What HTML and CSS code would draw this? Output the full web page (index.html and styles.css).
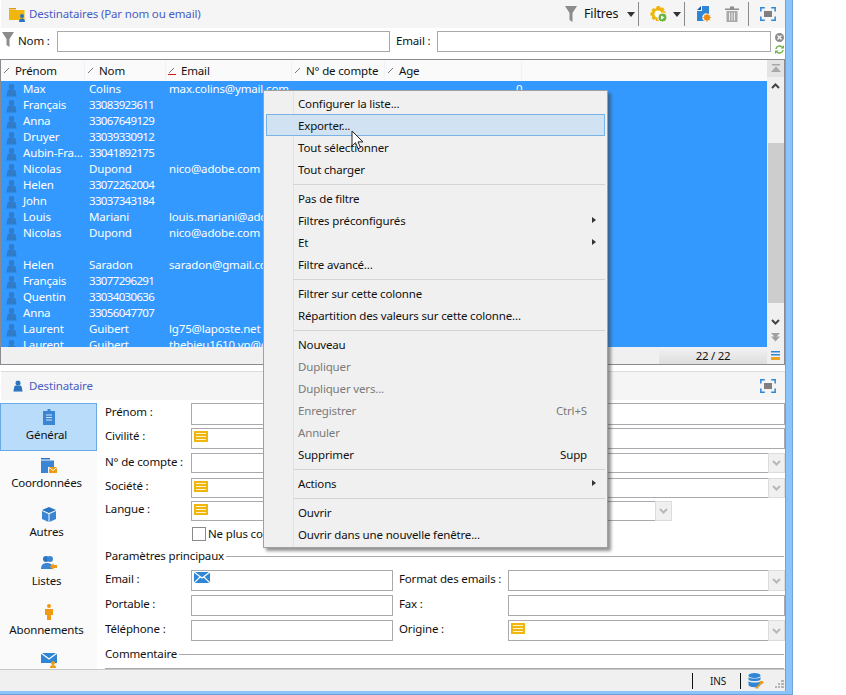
FILE: index.html
```html
<!DOCTYPE html>
<html lang="fr">
<head>
<meta charset="utf-8">
<title>Destinataires</title>
<link rel="stylesheet" href="styles.css">
</head>
<body>
<svg class="defs" width="0" height="0" aria-hidden="true">
  <symbol id="person" viewBox="0 0 12 14"><circle cx="6" cy="3.500" r="3"/><path d="M3.500 6.500h5c1 0 1.800.8 2 1.800L11.500 14H.5l1-5.700c.2-1 1-1.800 2-1.800z"/></symbol>
  <symbol id="max" viewBox="0 0 16 14"><path fill="none" stroke="#2f86d6" stroke-width="1.500" d="M.8 4.500V.8h4M11.200.8h4v3.700M15.200 9.500v3.700h-4M4.800 13.200h-4V9.500"/><rect x="4" y="4" width="8" height="6" fill="#808080"/></symbol>
  <symbol id="list" viewBox="0 0 14 11"><rect width="14" height="11" fill="#f1b60d"/><path d="M2 2.500h10M2 5.500h10M2 8.500h10" stroke="#fdf3cf" stroke-width="1"/></symbol>
  <symbol id="env" viewBox="0 0 16 11"><rect width="16" height="11" fill="#2f86d6"/><path d="M0 0l8 6 8-6M0 11l6-6M16 11l-6-6" fill="none" stroke="#fff" stroke-width="1.200"/></symbol>
  <symbol id="chev" viewBox="0 0 9 6"><path d="M1 1l3.500 3.500L8 1" fill="none" stroke="currentColor" stroke-width="2"/></symbol>
</svg>
<div class="window">
  <div class="inner">
    <header class="toolbar">
      <div class="title">
        <svg class="ic-folder" width="17" height="15" viewBox="0 0 17 15"><path d="M0 1h7v1.500H0z" fill="#e39a12"/><path d="M0 3h15.500v10H0z" fill="#f1b60d"/><circle cx="13" cy="9" r="2" fill="#2b74c0"/><path d="M10 15c0-2.500 1-3.500 3-3.500s3 1 3 3.500z" fill="#2b74c0"/></svg>
        <span>Destinataires (Par nom ou email)</span>
      </div>
      <div class="tools">
        <svg class="funnel t1" width="12" height="16" viewBox="0 0 12 16"><path d="M0 0h12L7.500 7v9l-3-2V7z" fill="#8c8c8c"/></svg>
        <span class="filtres">Filtres</span>
        <i class="caret c1"></i>
        <i class="tsep s1"></i>
        <svg class="t2" width="18" height="18" viewBox="0 0 18 18"><path d="M7 1h3l.5 2 2-.8 2 2-1 1.800 2 .6v3l-2 .5.5 1.500-3 3-1.500-.6-.5 2H6l-.6-2-1.900.9-2-2 .9-1.900-2-.6v-3l2-.5-.9-1.900 2-2 1.900.9z" fill="#f1b60d"/><circle cx="8" cy="9" r="3.500" fill="#fff"/><circle cx="12.500" cy="12.500" r="4.500" fill="#6db33f" stroke="#fff"/><path d="M11 10.500l3.500 2-3.500 2z" fill="#fff"/></svg>
        <i class="caret c2"></i>
        <i class="tsep s2"></i>
        <svg class="t3" width="14" height="16" viewBox="0 0 14 16"><path d="M5 0h7v8a4 4 0 0 0-5 7H0V5h5z" fill="#2f86d6"/><path d="M4 0v4H0z" fill="#1f5ea8"/><circle cx="10" cy="11.500" r="3" fill="#ef8a12"/><path d="M10 7v9M5.500 11.500h9M7 8.500l6 6M13 8.500l-6 6" stroke="#ef8a12" stroke-width=".8"/></svg>
        <svg class="t4" width="14" height="16" viewBox="0 0 14 16"><path d="M0 2.500h14v1.500H0zM5 .5h4v2H5z" fill="#8c8c8c"/><path d="M1.500 5h11v11h-11z" fill="#a8a8a8"/><path d="M4.500 6.500v8M7 6.500v8M9.500 6.500v8" stroke="#eee"/></svg>
        <i class="tsep s3"></i>
        <svg class="t5" width="16" height="14"><use href="#max"/></svg>
      </div>
    </header>

    <div class="filterbar">
      <svg class="f-funnel" width="12" height="15" viewBox="0 0 12 15"><path d="M0 0h12L7.500 7v8l-3-2V7z" fill="#8c8c8c"/></svg>
      <label class="f-label f-lnom">Nom :</label>
      <div class="box f-nom"></div>
      <label class="f-label f-mail">Email :</label>
      <div class="box f-email"></div>
      <div class="f-actions">
        <svg width="9" height="9" viewBox="0 0 9 9"><circle cx="4.500" cy="4.500" r="4.500" fill="#8c8c8c"/><path d="M2.500 2.500l4 4M6.500 2.500l-4 4" stroke="#fff" stroke-width="1.200"/></svg>
        <svg width="9" height="9" viewBox="0 0 9 9"><path d="M1 4a3.500 3.500 0 0 1 6-2M8 5a3.500 3.500 0 0 1-6 2" fill="none" stroke="#6db33f" stroke-width="1.500"/><path d="M9 0v3.500H5.500zM0 9V5.500h3.500z" fill="#6db33f"/></svg>
      </div>
    </div>

    <section class="table">
      <div class="t-main">
        <div class="thead">
          <div class="th w1"><i class="sort"></i>Prénom</div>
          <div class="th w2"><i class="sort"></i>Nom</div>
          <div class="th w3"><i class="sort"></i><i class="sort-red"></i>Email</div>
          <div class="th w4"><i class="sort"></i>N° de compte</div>
          <div class="th w5"><i class="sort"></i>Age</div>
        </div>
        <div class="tbody">
          <div class="tr"><svg class="p"><use href="#person"/></svg><span class="td c1st">Max</span><span class="td c2nd">Colins</span><span class="td c3rd">max.colins@ymail.com</span><span class="td c5th">0</span></div>
          <div class="tr"><svg class="p"><use href="#person"/></svg><span class="td c1st">Français</span><span class="td c2nd num">33083923611</span></div>
          <div class="tr"><svg class="p"><use href="#person"/></svg><span class="td c1st">Anna</span><span class="td c2nd num">33067649129</span></div>
          <div class="tr"><svg class="p"><use href="#person"/></svg><span class="td c1st">Druyer</span><span class="td c2nd num">33039330912</span></div>
          <div class="tr"><svg class="p"><use href="#person"/></svg><span class="td c1st">Aubin-Fra...</span><span class="td c2nd num">33041892175</span></div>
          <div class="tr"><svg class="p"><use href="#person"/></svg><span class="td c1st">Nicolas</span><span class="td c2nd">Dupond</span><span class="td c3rd">nico@adobe.com</span></div>
          <div class="tr"><svg class="p"><use href="#person"/></svg><span class="td c1st">Helen</span><span class="td c2nd num">33072262004</span></div>
          <div class="tr"><svg class="p"><use href="#person"/></svg><span class="td c1st">John</span><span class="td c2nd num">33037343184</span></div>
          <div class="tr"><svg class="p"><use href="#person"/></svg><span class="td c1st">Louis</span><span class="td c2nd">Mariani</span><span class="td c3rd">louis.mariani@adobe.com</span></div>
          <div class="tr"><svg class="p"><use href="#person"/></svg><span class="td c1st">Nicolas</span><span class="td c2nd">Dupond</span><span class="td c3rd">nico@adobe.com</span></div>
          <div class="tr"><svg class="p"><use href="#person"/></svg></div>
          <div class="tr"><svg class="p"><use href="#person"/></svg><span class="td c1st">Helen</span><span class="td c2nd">Saradon</span><span class="td c3rd">saradon@gmail.com</span></div>
          <div class="tr"><svg class="p"><use href="#person"/></svg><span class="td c1st">Français</span><span class="td c2nd num">33077296291</span></div>
          <div class="tr"><svg class="p"><use href="#person"/></svg><span class="td c1st">Quentin</span><span class="td c2nd num">33034030636</span></div>
          <div class="tr"><svg class="p"><use href="#person"/></svg><span class="td c1st">Anna</span><span class="td c2nd num">33056047707</span></div>
          <div class="tr"><svg class="p"><use href="#person"/></svg><span class="td c1st">Laurent</span><span class="td c2nd">Guibert</span><span class="td c3rd">lg75@laposte.net</span></div>
          <div class="tr"><svg class="p"><use href="#person"/></svg><span class="td c1st">Laurent</span><span class="td c2nd">Guibert</span><span class="td c3rd">thebieu1610.vn@gmail.com</span></div>
        </div>
        <div class="tfoot"><span class="count">22 / 22</span></div>
      </div>
      <div class="scroll">
        <div class="sb-top"><svg width="12" height="9" viewBox="0 0 12 9"><path d="M2 0h8v1.500H2zM6 2.500L11 8H1z" fill="#a8a8a8"/></svg></div>
        <svg class="sb-up" width="9" height="6"><use href="#chev" transform="matrix(1 0 0 -1 0 6)"/></svg>
        <div class="sb-thumb"></div>
        <svg class="sb-down" width="9" height="6"><use href="#chev"/></svg>
        <svg class="sb-end" width="9" height="9" viewBox="0 0 9 9"><path d="M0 0h9L4.500 4.500zM0 3.500h9L4.500 8.500z" fill="#a0a0a0"/></svg>
        <svg class="sb-menu" width="9" height="9" viewBox="0 0 9 9"><path d="M0 0h9v1.500H0zM0 3h9v1.500H0z" fill="#2f86d6"/><path d="M0 6h9v3H0z" fill="#efa21e"/></svg>
      </div>
    </section>

    <div class="d-head">
      <div class="title">
        <svg class="d-person" width="10" height="14" viewBox="0 0 12 14"><use href="#person"/></svg>
        <span>Destinataire</span>
      </div>
      <svg width="16" height="14"><use href="#max"/></svg>
    </div>

    <div class="detail">
      <nav class="tabs">
        <div class="tab active">
          <svg width="12" height="16" viewBox="0 0 12 16"><path d="M4.500 0h3v2H12v14H0V2h4.500z" fill="#3a86d4"/><path d="M3 6h6M3 8.500h6M3 11h6" stroke="#cfe4f8"/></svg>
          <span>Général</span>
        </div>
        <div class="tab">
          <svg width="16" height="15" viewBox="0 0 16 15"><path d="M0 0h9v1.500H0z" fill="#2b74c0"/><path d="M0 2.500h13V9H7v6H0z" fill="#3a86d4"/><rect x="8" y="9" width="8" height="6" fill="#ef9a12"/><path d="M8 9.500l4 3 4-3" fill="none" stroke="#fff"/></svg>
          <span>Coordonnées</span>
        </div>
        <div class="tab">
          <svg width="14" height="15" viewBox="0 0 14 15"><path d="M7 0l7 3-7 3-7-3z" fill="#2b74c0"/><path d="M0 4l6.500 3v8L0 12zM14 4L7.500 7v8l6.500-3z" fill="#3a86d4"/></svg>
          <span>Autres</span>
        </div>
        <div class="tab">
          <svg width="16" height="16" viewBox="0 0 16 16"><circle cx="5" cy="4" r="3" fill="#2b74c0"/><circle cx="9" cy="4" r="3" fill="#3a86d4"/><path d="M0 14c0-4 2-6 6-6s6 2 6 6z" fill="#3a86d4"/><path d="M9 11.500L12.500 8v2H16v3h-3.500v2z" fill="#ef9a12"/></svg>
          <span>Listes</span>
        </div>
        <div class="tab">
          <svg width="8" height="16" viewBox="0 0 8 16"><circle cx="4" cy="2" r="2" fill="#ef9a12"/><path d="M0 5h8v6H6v5H2v-5H0z" fill="#ef9a12"/></svg>
          <span>Abonnements</span>
        </div>
        <div class="tab tab-cut">
          <svg width="16" height="15" viewBox="0 0 16 15"><rect width="16" height="10" fill="#2f86d6"/><path d="M0 0l8 6 8-6" fill="none" stroke="#fff" stroke-width="1.200"/><circle cx="12" cy="10" r="2" fill="#ef9a12"/><path d="M9 15c0-2 1-3 3-3s3 1 3 3z" fill="#ef9a12"/></svg>
        </div>
      </nav>

      <div class="form">
        <div class="row r1"><label class="lab">Prénom :</label><div class="box grow"></div></div>
        <div class="row r2"><label class="lab">Civilité :</label><div class="box grow"><svg class="li"><use href="#list"/></svg></div></div>
        <div class="row r3"><label class="lab">N° de compte :</label><div class="box grow combo"><div class="dd"><svg width="9" height="6"><use href="#chev"/></svg></div></div></div>
        <div class="row r4"><label class="lab">Société :</label><div class="box grow combo"><svg class="li"><use href="#list"/></svg><div class="dd"><svg width="9" height="6"><use href="#chev"/></svg></div></div></div>
        <div class="row r5"><label class="lab">Langue :</label><div class="box lang combo"><svg class="li"><use href="#list"/></svg><div class="dd"><svg width="9" height="6"><use href="#chev"/></svg></div></div></div>
        <div class="row r6"><i class="lab"></i><span class="check"></span><span class="check-l">Ne plus contacter</span></div>
        <div class="legend lg1"><span>Paramètres principaux</span><i></i></div>
        <div class="row r7"><label class="lab">Email :</label><div class="box half"><svg class="en"><use href="#env"/></svg></div><label class="lab2">Format des emails :</label><div class="box grow combo"><div class="dd"><svg width="9" height="6"><use href="#chev"/></svg></div></div></div>
        <div class="row r8"><label class="lab">Portable :</label><div class="box half"></div><label class="lab2">Fax :</label><div class="box grow"></div></div>
        <div class="row r9"><label class="lab">Téléphone :</label><div class="box half"></div><label class="lab2">Origine :</label><div class="box grow combo"><svg class="li"><use href="#list"/></svg><div class="dd"><svg width="9" height="6"><use href="#chev"/></svg></div></div></div>
        <div class="legend lg2"><span>Commentaire</span><i></i></div>
        <div class="area"></div>
      </div>
    </div>

    <footer class="status">
      <i class="st-sep sp1"></i>
      <span class="ins">INS</span>
      <i class="st-sep sp2"></i>
      <svg class="db" width="16" height="16" viewBox="0 0 16 16"><ellipse cx="6.500" cy="2.500" rx="6" ry="2.500" fill="#2f86d6"/><path d="M.5 4c1 2 11 2 12 0v2.500c-1 2-11 2-12 0zM.5 8c1 2 11 2 12 0v4c-1 3-11 3-12 0z" fill="#2f86d6"/><path d="M7 15l1.500-1.500 1-1 3-3 1 1-3 3 0 2-2 0z" fill="#ef9a12"/><circle cx="13.500" cy="9.500" r="1.800" fill="#ef9a12"/></svg>
      <svg class="grip" width="9" height="9" viewBox="0 0 9 9"><path d="M6 0h3v2H6zM3 3h2v2H3zM6 3h3v2H6zM0 6h2v2H0zM3 6h2v2H3zM6 6h3v2H6z" fill="#b4b4b4"/></svg>
    </footer>
  </div>
</div>

<div class="menu">
  <div class="mi">Configurer la liste...</div>
  <div class="mi hot">Exporter...</div>
  <div class="mi">Tout sélectionner</div>
  <div class="mi">Tout charger</div>
  <div class="ms"></div>
  <div class="mi">Pas de filtre</div>
  <div class="mi sub">Filtres préconfigurés</div>
  <div class="mi sub">Et</div>
  <div class="mi">Filtre avancé...</div>
  <div class="ms"></div>
  <div class="mi">Filtrer sur cette colonne</div>
  <div class="mi">Répartition des valeurs sur cette colonne...</div>
  <div class="ms"></div>
  <div class="mi">Nouveau</div>
  <div class="mi off">Dupliquer</div>
  <div class="mi off">Dupliquer vers...</div>
  <div class="mi off">Enregistrer<span class="key">Ctrl+S</span></div>
  <div class="mi off">Annuler</div>
  <div class="mi">Supprimer<span class="key">Supp</span></div>
  <div class="ms"></div>
  <div class="mi sub">Actions</div>
  <div class="ms"></div>
  <div class="mi">Ouvrir</div>
  <div class="mi">Ouvrir dans une nouvelle fenêtre...</div>
</div>
<svg class="cursor" width="13" height="20" viewBox="0 0 13 20"><path d="M1 1v15l3.500-3.300 2.500 6 2.500-1-2.500-5.800H12z" fill="#fff" stroke="#222" stroke-width="1"/></svg>
</body>
</html>
```
FILE: styles.css
```css
* { box-sizing: border-box; }
html, body { margin: 0; padding: 0; background: #fff; }
body {
  width: 846px; height: 695px; overflow: hidden; position: relative;
  font-family: "Noto Sans", "Liberation Sans", sans-serif;
  font-size: 11.500px; line-height: 16px; color: #111; letter-spacing: -0.16px;
}
i { display: block; font-style: normal; }
svg { display: block; flex: none; }
.defs { position: absolute; }

.window {
  width: 793px; height: 695px; background: #8ac4fa;
  border-right: 1px solid #6fa3d8; border-bottom: 1px solid #6fa3d8;
  padding: 0 7px 3px 0;
}
.inner { width: 785px; height: 691px; background: #fff; display: flex; flex-direction: column; box-shadow: 1px 0 #6fa3d8; }

/* toolbar */
.toolbar { height: 28px; margin-left: 1px; background: #f5f5f5; display: flex; justify-content: space-between; align-items: center; flex: none; }
.title { display: flex; align-items: center; color: #4a5cc4; }
.ic-folder { margin: 0 3px 0 8px; }
.tools { display: flex; align-items: center; height: 28px; width: 220px; flex: none; }
.filtres { margin-left: 7px; font-size: 12.500px; width: 43px; flex: none; }
.caret { width: 0; height: 0; border: 4px solid transparent; border-top: 5px solid #333; border-bottom: 0; flex: none; }
.tsep { width: 1px; height: 24px; background: #8a8a8a; flex: none; }
.s1 { margin-left: 3px; }
.t2 { margin-left: 11px; }
.c2 { margin-left: 5px; }
.s2 { margin-left: 3px; }
.t3 { margin-left: 12px; }
.t4 { margin-left: 14px; }
.s3 { margin-left: 9px; }
.t5 { margin-left: 11px; }

/* filter */
.filterbar { height: 31px; display: flex; align-items: flex-start; padding: 3px 0 0 2px; flex: none; position: relative; }
.f-funnel { margin: 1px 4px 0 0; }
.f-label { line-height: 20px; flex: none; white-space: nowrap; }
.f-lnom { width: 39px; }
.f-mail { width: 41px; margin-left: 6px; }
.box { border: 1px solid #a9a9ae; background: #fff; position: relative; }
.f-nom { width: 333px; height: 21px; flex: none; }
.f-email { width: 334px; height: 21px; flex: none; }
.f-actions { display: flex; flex-direction: column; gap: 3px; margin: 2px 0 0 4px; flex: none; }

/* table */
.table { height: 306px; border: 1px solid #8a8a90; display: flex; flex: none; }
.t-main { width: 766px; flex: none; display: flex; flex-direction: column; }
.thead { height: 21px; display: flex; background: #fafafa; flex: none; }
.th { position: relative; padding-left: 14px; line-height: 21px; border-right: 1px solid #eef3f9; flex: none; }
.w1 { width: 84px; } .w2 { width: 81px; } .w3 { width: 126px; padding-left: 15px; } .w4 { width: 93px; } .w5 { width: 137px; }
.sort { position: absolute; left: 3px; top: 8px; width: 5px; height: 5px; background: linear-gradient(135deg, transparent 42%, #777 42%, #777 58%, transparent 58%); }
.sort-red { position: absolute; left: 2px; top: 14px; width: 8px; height: 1px; background: #d01818; }
.tbody { height: 266px; overflow: hidden; background: #3399ff; flex: none; }
.tr { height: 16px; position: relative; color: #fff; display: flex; white-space: nowrap; }
.p { width: 11px; height: 14px; position: absolute; left: 5px; top: 2px; fill: #2f7ccb; }
.td { position: absolute; top: 0; }
.num { letter-spacing: -0.65px; }
.c1st { left: 22px; } .c2nd { left: 88px; } .c3rd { left: 168px; } .c5th { left: 515px; }
.tfoot { flex: 1; background: #f0f0f0; position: relative; }
.count { position: absolute; left: 658px; top: 0; bottom: 0; width: 108px; text-align: center; line-height: 17px; letter-spacing: -0.3px; background: linear-gradient(#f2f2f2, #dedede); }
.scroll { flex: 1; background: #f0f0f0; position: relative; display: flex; flex-direction: column; align-items: center; }
.sb-top { width: 100%; height: 17px; background: #e3e3e3; display: flex; justify-content: center; align-items: center; flex: none; }
.sb-up { margin-top: 6px; color: #444; }
.sb-thumb { width: 16px; height: 160px; background: #cdcdcd; margin-top: 54px; flex: none; }
.sb-down { margin-top: 16px; color: #444; }
.sb-end { margin-top: 8px; }
.sb-menu { margin-top: 9px; }

/* detail head */
.d-head { height: 29px; margin: 6px 0 0 1px; border-top: 1px solid #dcdcdc; background: #f5f5f5; display: flex; justify-content: space-between; align-items: center; padding-right: 9px; flex: none; }
.d-person { margin: 0 6px 0 12px; fill: #2b74c0; }

/* detail */
.detail { flex: 1; min-height: 0; display: flex; padding-top: 3px; overflow: hidden; }
.tabs { width: 97px; background: #fafafa; flex: none; display: flex; flex-direction: column; overflow: hidden; }
.tab { height: 49px; display: flex; flex-direction: column; align-items: center; justify-content: flex-end; gap: 2px; padding-bottom: 9px; flex: none; }
.tab span { margin-right: 4px; }
.tab.active { background: #b9dcfb; border: 1px solid #6aa9e6; height: 48px; padding-bottom: 7px; }
.tab-cut { height: 22px; padding: 6px 0 0; justify-content: flex-start; overflow: hidden; }
.form { flex: 1; padding-left: 8px; min-width: 0; }
.row { display: flex; align-items: flex-start; }
.row .box { height: 100%; }
.lab { width: 86px; flex: none; line-height: 18px; white-space: nowrap; }
.r2 .lab, .r4 .lab, .r5 .lab { line-height: 16px; }
.grow { flex: 1; }
.half { width: 202px; flex: none; }
.lab2 { width: 109px; margin-left: 6px; flex: none; line-height: 18px; white-space: nowrap; }
.lang { width: 481px; flex: none; }
.combo { padding-right: 16px; }
.dd { position: absolute; right: -1px; top: -1px; bottom: -1px; width: 17px; background: #f0f0f0; border: 1px solid #dcdcdc; color: #b8b8b8; display: flex; align-items: center; justify-content: center; }
.li { width: 14px; height: 11px; position: absolute; left: 2px; top: 2px; }
.en { width: 16px; height: 11px; position: absolute; left: 2px; top: 1px; }
.r1 { height: 22px; }
.r2 { height: 21px; margin-top: 3px; }
.r3 { height: 20px; margin-top: 4px; }
.r4 { height: 20px; margin-top: 5px; }
.r5 { height: 20px; margin-top: 3px; }
.r6 { height: 14px; margin-top: 6px; align-items: center; }
.check { width: 14px; height: 14px; border: 1px solid #8a8a8a; background: #fff; margin-left: 1px; flex: none; }
.check-l { margin-left: 2px; white-space: nowrap; }
.legend { display: flex; align-items: center; height: 16px; }
.legend span { flex: none; }
.legend i { flex: 1; height: 1px; background: #a9a9ae; margin: 1px 1px 0 2px; }
.lg1 { margin-top: 7px; }
.r7 { height: 21px; margin-top: 6px; }
.r8 { height: 21px; margin-top: 4px; }
.r9 { height: 21px; margin-top: 4px; }
.lg2 { margin-top: 5px; }
.area { height: 6px; border-top: 1px solid #a9a9ae; margin: 6px 1px 0 0; }

/* status */
.status { height: 22px; background: #f0f0f0; border-top: 1px solid #c8c8c8; display: flex; align-items: center; flex: none; padding-left: 692px; }
.st-sep { width: 1px; height: 16px; background: #111; flex: none; }
.ins { width: 47px; text-align: center; font-size: 10px; padding-left: 3px; flex: none; }
.db { margin-left: 7px; }
.grip { margin-left: 11px; margin-top: 8px; }

/* menu */
.menu {
  position: absolute; left: 263px; top: 90px; width: 345px; height: 458px;
  background: #f0f0f0 linear-gradient(90deg, transparent 29px, #e2e2e2 29px, #e2e2e2 30px, transparent 30px);
  border: 1px solid #a0a0a0; padding: 1px 2px;
  box-shadow: 3px 3px 3px rgba(60, 60, 60, .55);
}
.mi { height: 22px; line-height: 23px; padding-left: 32px; padding-right: 18px; position: relative; display: flex; justify-content: space-between; white-space: nowrap; }
.hot { background: #d1e2f2; outline: 1px solid #7ab2e8; outline-offset: -1px; }
.off { color: #7a7a7a; }
.sub::after { content: ""; position: absolute; right: 9px; top: 8px; border: 3.500px solid transparent; border-left: 4px solid #333; border-right: 0; }
.ms { height: 7px; margin-left: 27px; position: relative; }
.ms::after { content: ""; position: absolute; left: 0; right: 0; top: 4px; height: 1px; background: #d4d4d4; }
.cursor { position: absolute; left: 351px; top: 130px; }
```
